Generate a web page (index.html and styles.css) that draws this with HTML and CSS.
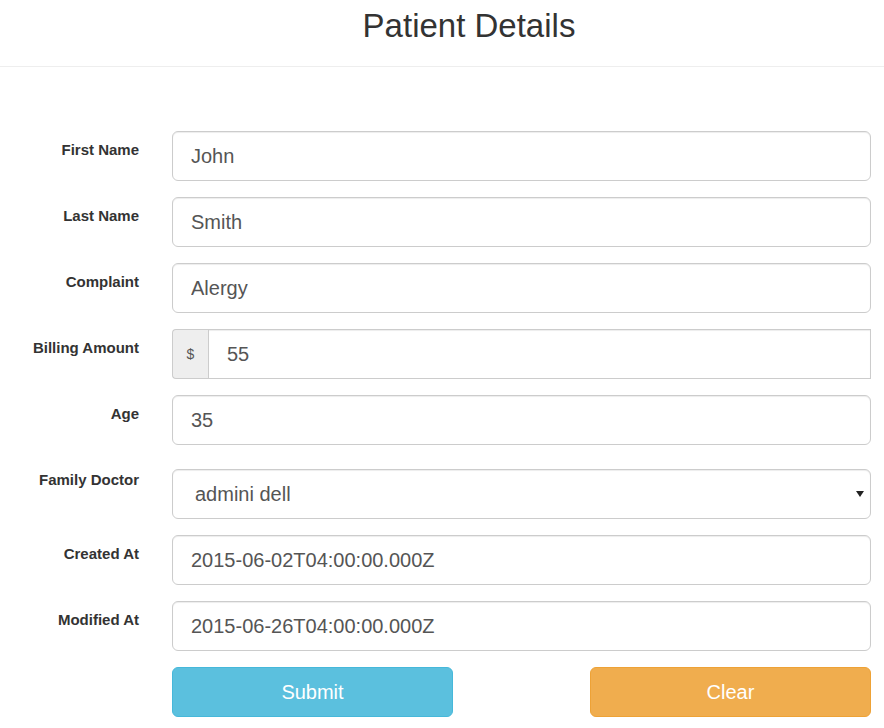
FILE: index.html
```html
<!DOCTYPE html>
<html>
<head>
<meta charset="utf-8">
<link rel="stylesheet" href="styles.css">
</head>
<body>
<header class="page-header">
  <h1 class="title">Patient Details</h1>
</header>
<form class="form">
  <div class="row">
    <label class="label">First Name</label>
    <input class="control" type="text" value="John">
  </div>
  <div class="row">
    <label class="label">Last Name</label>
    <input class="control" type="text" value="Smith">
  </div>
  <div class="row">
    <label class="label">Complaint</label>
    <input class="control" type="text" value="Alergy">
  </div>
  <div class="row">
    <label class="label">Billing Amount</label>
    <div class="input-group">
      <span class="addon">$</span>
      <input class="control group-control" type="text" value="55">
    </div>
  </div>
  <div class="row">
    <label class="label">Age</label>
    <input class="control" type="text" value="35">
  </div>
  <div class="row">
    <label class="label">Family Doctor</label>
    <div class="select-wrap">
      <select class="control select">
        <option>admini dell</option>
      </select>
    </div>
  </div>
  <div class="row">
    <label class="label">Created At</label>
    <input class="control" type="text" value="2015-06-02T04:00:00.000Z">
  </div>
  <div class="row">
    <label class="label">Modified At</label>
    <input class="control" type="text" value="2015-06-26T04:00:00.000Z">
  </div>
  <div class="row">
    <span></span>
    <div class="actions">
      <button type="button" class="btn btn-info">Submit</button>
      <button type="button" class="btn btn-warning">Clear</button>
    </div>
  </div>
</form>
</body>
</html>
```
FILE: styles.css
```css
* { box-sizing: border-box; }
body {
  margin: 0;
  background: #fff;
  font-family: "Liberation Sans", Arial, sans-serif;
  color: #333;
}
.page-header {
  height: 67px;
  border-bottom: 1px solid #eee;
  padding-left: 54px;
  text-align: center;
}
.title {
  margin: 0;
  padding-top: 6px;
  font-size: 33px;
  font-weight: normal;
  line-height: 40px;
  color: #333;
}
.form {
  padding-top: 64px;
  display: flex;
  flex-direction: column;
  gap: 16px;
}
.row {
  display: grid;
  grid-template-columns: 139px 699px;
  column-gap: 33px;
  align-items: start;
}
.label {
  font-size: 15px;
  font-weight: bold;
  text-align: right;
  line-height: 20px;
  padding-top: 9px;
  color: #333;
}
.control {
  display: block;
  width: 100%;
  height: 50px;
  padding: 0 18px;
  font-family: "Liberation Sans", Arial, sans-serif;
  font-size: 20px;
  color: #555;
  background: #fff;
  border: 1px solid #ccc;
  border-radius: 6px;
  box-shadow: inset 0 1px 1px rgba(0,0,0,0.075);
  outline: none;
}
.input-group {
  display: flex;
  height: 50px;
}
.addon {
  width: 36px;
  flex: none;
  display: flex;
  align-items: center;
  justify-content: center;
  font-size: 14px;
  color: #555;
  background: #eee;
  border: 1px solid #ccc;
  border-right: 0;
  border-radius: 4px 0 0 4px;
}
.group-control {
  flex: 1;
  border-radius: 0;
}
.select-wrap {
  position: relative;
  margin-top: 8px;
}
.select {
  appearance: none;
  -webkit-appearance: none;
  padding-left: 22px;
}
.select-wrap::after {
  content: "";
  position: absolute;
  right: 7px;
  top: 22px;
  border-left: 4px solid transparent;
  border-right: 4px solid transparent;
  border-top: 6px solid #222;
}
.actions {
  display: flex;
  justify-content: space-between;
}
.btn {
  width: 281px;
  height: 50px;
  border: 1px solid;
  border-radius: 6px;
  font-family: "Liberation Sans", Arial, sans-serif;
  font-size: 20px;
  color: #fff;
  cursor: pointer;
}
.btn-info {
  background: #5bc0de;
  border-color: #46b8da;
}
.btn-warning {
  background: #f0ad4e;
  border-color: #eea236;
}
```
